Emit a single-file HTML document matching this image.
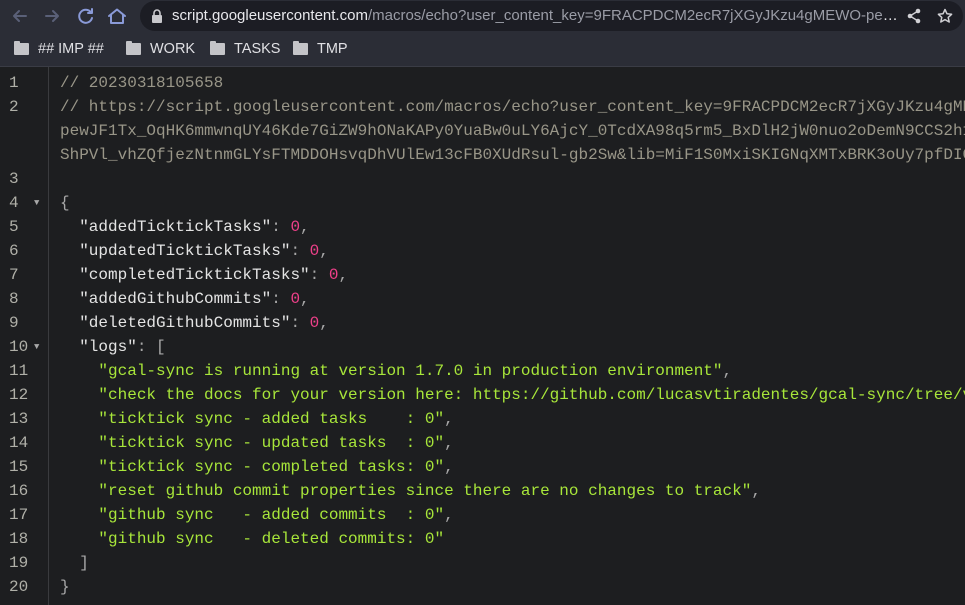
<!DOCTYPE html>
<html><head><meta charset="utf-8"><style>
*{margin:0;padding:0;box-sizing:border-box}
body{width:965px;height:605px;overflow:hidden;background:#1d1e20;font-family:"Liberation Sans",sans-serif;position:relative}
.top{position:absolute;left:0;top:0;width:965px;height:33px;background:#2b2d36}
.bm{position:absolute;left:0;top:33px;width:965px;height:34px;background:#2b2d36;border-bottom:1px solid #3a3c45}
.url{position:absolute;left:140px;top:1px;width:823px;height:30px;border-radius:15px;background:#1c1d24;overflow:hidden}
.url span{position:absolute;left:32px;top:6px;width:728px;overflow:hidden;text-overflow:ellipsis;font-size:15px;color:#e8e8ec;white-space:nowrap}
.url span i{font-style:normal;color:#9a9ca6}
.b{position:absolute;font-size:14.5px;color:#e0e0e4;display:flex;align-items:center;gap:9px}
.f{width:15px;height:12px;background:#c4c4c8;border-radius:1px;position:relative}
.f:before{content:"";position:absolute;left:0;top:-2px;width:6px;height:3px;background:#c4c4c8;border-radius:1px 1px 0 0}
.code{position:absolute;left:0;top:71px;width:965px;height:534px;overflow:hidden;font-family:"Liberation Mono",monospace;font-size:16px;line-height:24px;white-space:pre}
.gut{position:absolute;left:0;top:67px;width:49px;height:538px;border-right:1px solid #3a3b3e}
.ln{position:absolute;left:9px;color:#b0b0a8;width:30px}
.tx{position:absolute;left:60px;color:#d8d8d8}
.c{color:#999688}.s{color:#a8e63a}.k{color:#e4e4e4}.n{color:#f0408a}.p{color:#a8a8a8}
.tri{position:absolute;left:34px;font-size:9px;color:#a8a8a8}
</style></head><body>
<div class="top">
<svg style="position:absolute;left:10px;top:6px" width="125" height="22" fill="none" stroke-width="2" stroke-linecap="round" stroke-linejoin="round">
<path d="M16 10H4M9 5L4 10l5 5" stroke="#5a6078"/>
<path d="M36 10h12M43 5l5 5-5 5" stroke="#5a6078"/>
<path d="M81 6.5A6.5 6.5 0 1 0 82 12" stroke="#8a9ad8"/><path d="M82 3v4h-4" stroke="#8a9ad8"/>
<path d="M99 10l8-6.5 8 6.5M101 8.5V17h12V8.5" stroke="#8a9ad8"/>
</svg>
<div class="url"><svg style="position:absolute;left:11px;top:8px" width="12" height="14"><rect x="1" y="6" width="10" height="8" rx="1" fill="#c8c8cc"/><path d="M3 6V4a3 3 0 0 1 6 0v2" stroke="#c8c8cc" stroke-width="1.6" fill="none"/></svg>
<span>script.googleusercontent.com<i>/macros/echo?user_content_key=9FRACPDCM2ecR7jXGyJKzu4gMEWO-pewJF1Tx_OqHK6mmwnqUY46</i></span>
<svg style="position:absolute;left:766px;top:7px" width="16" height="16" fill="#d0d0d4"><circle cx="12" cy="3" r="2.3"/><circle cx="12" cy="13" r="2.3"/><circle cx="4" cy="8" r="2.3"/><path d="M12 3L4 8l8 5" stroke="#d0d0d4" stroke-width="1.4" fill="none"/></svg>
<svg style="position:absolute;left:797px;top:7px" width="16" height="16"><path d="M8 1.5l2 4.3 4.6.5-3.4 3.1 1 4.6L8 11.6 3.8 14l1-4.6L1.4 6.3 6 5.8z" fill="none" stroke="#d0d0d4" stroke-width="1.5" stroke-linejoin="round"/></svg>
</div></div>
<div class="bm">
<div class="b" style="left:14px;top:8px"><div class="f"></div>## IMP ##</div>
<div class="b" style="left:126px;top:8px"><div class="f"></div>WORK</div>
<div class="b" style="left:210px;top:8px"><div class="f"></div>TASKS</div>
<div class="b" style="left:293px;top:8px"><div class="f"></div>TMP</div>
</div>
<div class="gut"></div>
<div class="code">
<div class="ln" style="top:0">1</div><div class="tx c" style="top:0">// 20230318105658</div>
<div class="ln" style="top:24px">2</div><div class="tx c" style="top:24px">// https://script.googleusercontent.com/macros/echo?user_content_key=9FRACPDCM2ecR7jXGyJKzu4gMEWO-
pewJF1Tx_OqHK6mmwnqUY46Kde7GiZW9hONaKAPy0YuaBw0uLY6AjcY_0TcdXA98q5rm5_BxDlH2jW0nuo2oDemN9CCS2h1
ShPVl_vhZQfjezNtnmGLYsFTMDDOHsvqDhVUlEw13cFB0XUdRsul-gb2Sw&amp;lib=MiF1S0MxiSKIGNqXMTxBRK3oUy7pfDIG</div>
<div class="ln" style="top:96px">3</div>
<div class="ln" style="top:120px">4</div><div class="tri" style="top:120px">▼</div><div class="tx p" style="top:120px">{</div>
<div class="ln" style="top:144px">5</div><div class="tx" style="top:144px">  <span class="k">"addedTicktickTasks"</span><span class="p">: </span><span class="n">0</span><span class="p">,</span></div>
<div class="ln" style="top:168px">6</div><div class="tx" style="top:168px">  <span class="k">"updatedTicktickTasks"</span><span class="p">: </span><span class="n">0</span><span class="p">,</span></div>
<div class="ln" style="top:192px">7</div><div class="tx" style="top:192px">  <span class="k">"completedTicktickTasks"</span><span class="p">: </span><span class="n">0</span><span class="p">,</span></div>
<div class="ln" style="top:216px">8</div><div class="tx" style="top:216px">  <span class="k">"addedGithubCommits"</span><span class="p">: </span><span class="n">0</span><span class="p">,</span></div>
<div class="ln" style="top:240px">9</div><div class="tx" style="top:240px">  <span class="k">"deletedGithubCommits"</span><span class="p">: </span><span class="n">0</span><span class="p">,</span></div>
<div class="ln" style="top:264px">10</div><div class="tri" style="top:264px">▼</div><div class="tx" style="top:264px">  <span class="k">"logs"</span><span class="p">: [</span></div>
<div class="ln" style="top:288px">11</div><div class="tx s" style="top:288px">    "gcal-sync is running at version 1.7.0 in production environment"<span class="p">,</span></div>
<div class="ln" style="top:312px">12</div><div class="tx s" style="top:312px">    "check the docs for your version here: https://github.com/lucasvtiradentes/gcal-sync/tree/v1.7.0"</div>
<div class="ln" style="top:336px">13</div><div class="tx s" style="top:336px">    "ticktick sync - added tasks    : 0"<span class="p">,</span></div>
<div class="ln" style="top:360px">14</div><div class="tx s" style="top:360px">    "ticktick sync - updated tasks  : 0"<span class="p">,</span></div>
<div class="ln" style="top:384px">15</div><div class="tx s" style="top:384px">    "ticktick sync - completed tasks: 0"<span class="p">,</span></div>
<div class="ln" style="top:408px">16</div><div class="tx s" style="top:408px">    "reset github commit properties since there are no changes to track"<span class="p">,</span></div>
<div class="ln" style="top:432px">17</div><div class="tx s" style="top:432px">    "github sync   - added commits  : 0"<span class="p">,</span></div>
<div class="ln" style="top:456px">18</div><div class="tx s" style="top:456px">    "github sync   - deleted commits: 0"</div>
<div class="ln" style="top:480px">19</div><div class="tx p" style="top:480px">  ]</div>
<div class="ln" style="top:504px">20</div><div class="tx p" style="top:504px">}</div>
</div>
</body></html>
